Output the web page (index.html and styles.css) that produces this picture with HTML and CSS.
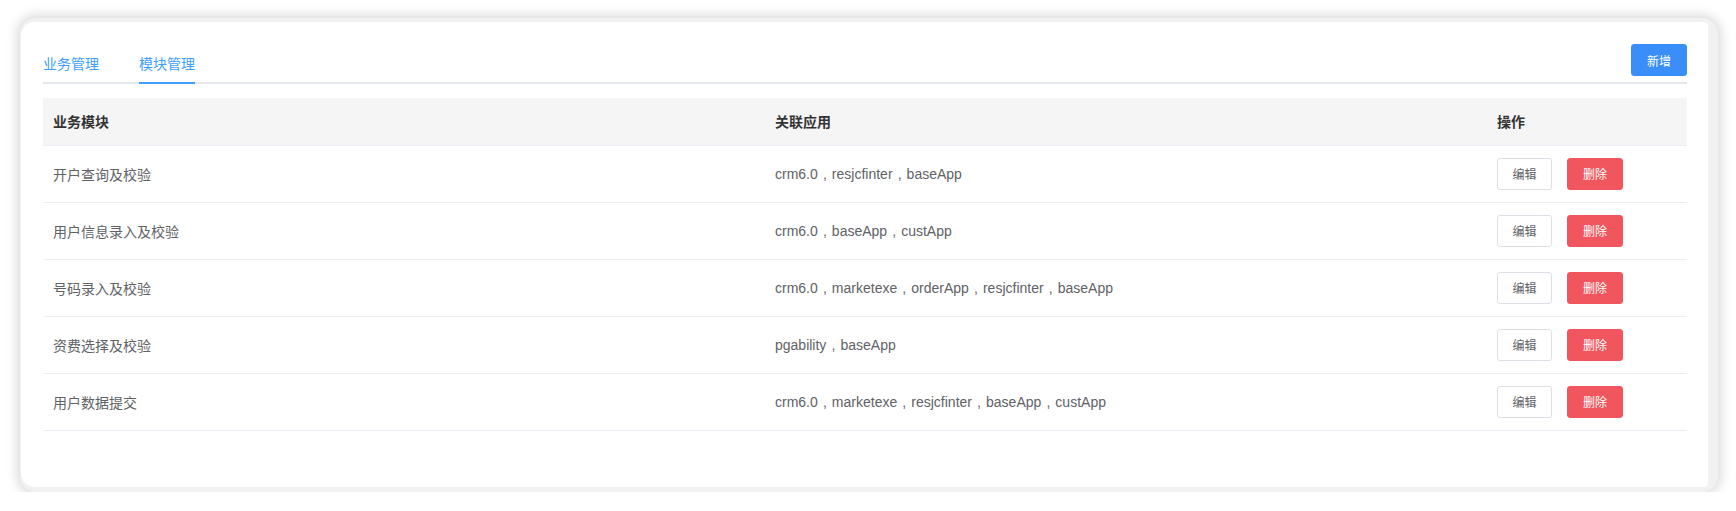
FILE: index.html
```html
<!DOCTYPE html>
<html lang="zh-CN">
<head>
<meta charset="utf-8">
<title>模块管理</title>
<link rel="stylesheet" href="styles.css">
</head>
<body>
<div class="card">
  <div class="panel">
    <div class="header">
      <div class="tabs">
        <div class="tab">业务管理</div>
        <div class="tab active">模块管理</div>
      </div>
      <button class="btn btn-primary">新增</button>
    </div>
    <table class="grid">
      <colgroup>
        <col class="c1"><col class="c2"><col class="c3">
      </colgroup>
      <thead>
        <tr><th>业务模块</th><th>关联应用</th><th>操作</th></tr>
      </thead>
      <tbody>
        <tr><td>开户查询及校验</td><td class="apps">crm6.0 , resjcfinter , baseApp</td><td><div class="ops"><button class="btn btn-edit">编辑</button><button class="btn btn-danger">删除</button></div></td></tr>
        <tr><td>用户信息录入及校验</td><td class="apps">crm6.0 , baseApp , custApp</td><td><div class="ops"><button class="btn btn-edit">编辑</button><button class="btn btn-danger">删除</button></div></td></tr>
        <tr><td>号码录入及校验</td><td class="apps">crm6.0 , marketexe , orderApp , resjcfinter , baseApp</td><td><div class="ops"><button class="btn btn-edit">编辑</button><button class="btn btn-danger">删除</button></div></td></tr>
        <tr><td>资费选择及校验</td><td class="apps">pgability , baseApp</td><td><div class="ops"><button class="btn btn-edit">编辑</button><button class="btn btn-danger">删除</button></div></td></tr>
        <tr><td>用户数据提交</td><td class="apps">crm6.0 , marketexe , resjcfinter , baseApp , custApp</td><td><div class="ops"><button class="btn btn-edit">编辑</button><button class="btn btn-danger">删除</button></div></td></tr>
      </tbody>
    </table>
  </div>
</div>
</body>
</html>
```

FILE: styles.css
```css
* { box-sizing: border-box; }
html, body {
  margin: 0;
  padding: 0;
  background: #ffffff;
  font-family: "Liberation Sans", "Noto Sans CJK SC", sans-serif;
  font-size: 14px;
  color: #606266;
}
.card {
  margin: 18px 0 0 20px;
  width: 1698px;
  height: 474px;
  background: #f1f1f1;
  border-style: solid;
  border-color: #f1f1f1;
  border-width: 4px 10px 5px 1px;
  border-radius: 16px;
  box-shadow: 0 0 12px 3px rgba(0, 0, 0, 0.15);
}
.panel {
  width: 100%;
  height: 100%;
  background: #ffffff;
  border-radius: 14px 4px 4px 14px;
  padding: 22px 21px 0 22px;
}
.header {
  display: flex;
  justify-content: space-between;
  align-items: flex-start;
  height: 40px;
  border-bottom: 2px solid #e4e7ed;
}
.tabs {
  display: flex;
  height: 40px;
}
.tab {
  height: 40px;
  line-height: 40px;
  margin-right: 40px;
  color: #409eff;
  font-size: 14px;
}
.tab.active {
  border-bottom: 2px solid #409eff;
}
.btn {
  font-family: "Liberation Sans", "Noto Sans CJK SC", sans-serif;
  font-size: 12px;
  height: 32px;
  border-radius: 3px;
  padding: 0;
  cursor: pointer;
}
.btn-primary {
  width: 56px;
  background: #3a8ef8;
  border: 1px solid #3a8ef8;
  color: #ffffff;
}
.grid {
  margin-top: 14px;
  width: 1644px;
  border-collapse: collapse;
  table-layout: fixed;
}
.c1 { width: 722px; }
.c2 { width: 722px; }
.c3 { width: 200px; }
.grid th {
  height: 47px;
  background: #f5f5f6;
  color: #333333;
  font-weight: bold;
  text-align: left;
  padding: 0 10px;
  border-bottom: 1px solid #ebeef5;
}
.grid td {
  height: 57px;
  padding: 0 10px;
  border-bottom: 1px solid #ebeef5;
  color: #606266;
}
.grid td.apps {
  word-spacing: 1.2px;
}
.ops {
  display: flex;
  gap: 15px;
}
.btn-edit {
  width: 55px;
  background: #ffffff;
  border: 1px solid #dcdfe6;
  color: #606266;
}
.btn-danger {
  width: 56px;
  background: #f1555d;
  border: 1px solid #f1555d;
  color: #ffffff;
}
```
